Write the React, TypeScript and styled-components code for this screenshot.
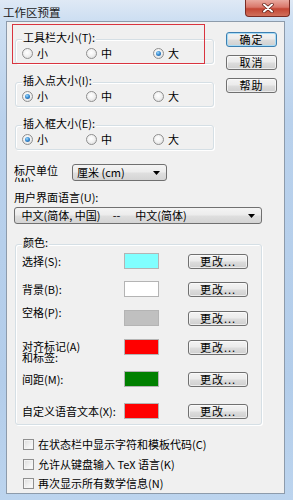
import React, { FC } from "react";
import styled, { createGlobalStyle } from "styled-components";

const GlobalStyle = createGlobalStyle`
  html, body {
    margin: 0;
    padding: 0;
    background: #ffffff;
  }
  body {
    font-family: "Noto Sans CJK SC", "Liberation Sans", sans-serif;
    font-size: 11px;
    color: #000000;
  }
`;

const Window = styled.div`
  width: 293px;
  height: 500px;
  display: flex;
  flex-direction: column;
  background: linear-gradient(to bottom, #dfe9f5 0px, #cddff2 20px, #b9d1ec 120px, #b3cdea 380px, #bcd4ee 100%);
  box-sizing: border-box;
`;

const TitleBar = styled.div`
  height: 21px;
  display: flex;
  justify-content: space-between;
  align-items: flex-start;
  flex-shrink: 0;
`;

const Title = styled.div`
  padding: 5px 0 0 3px;
  font-size: 11.5px;
  line-height: 14px;
  color: #1b1b1b;
`;

const CloseButton = styled.div`
  width: 45px;
  height: 17px;
  margin-right: 3px;
  display: flex;
  align-items: center;
  justify-content: center;
  border: 1px solid #7a2c24;
  border-top: none;
  border-radius: 0 0 4px 4px;
  box-sizing: border-box;
  background: linear-gradient(to bottom, #e9a99f 0%, #d9776a 45%, #c44634 55%, #d0705c 100%);
`;

const Client = styled.div`
  flex: 1;
  margin: 0 8px 6px 6px;
  position: relative;
  background: #f0f0f0;
  border: 1px solid #8d9bab;
  padding: 0 0 0 7px;
  display: flex;
  flex-direction: column;
  align-items: flex-start;
  overflow: hidden;
`;

const Highlight = styled.div`
  position: absolute;
  left: 5px;
  top: 2px;
  width: 193px;
  height: 40px;
  border: 1px solid #d9343f;
  box-sizing: border-box;
  pointer-events: none;
`;

const TopSection = styled.div`
  display: flex;
  align-items: flex-start;
  gap: 12px;
  margin-left: 1px;
`;

const GroupColumn = styled.div`
  width: 199px;
  padding-top: 17px;
  display: flex;
  flex-direction: column;
  gap: 18px;
`;

const ButtonColumn = styled.div`
  padding-top: 10px;
  display: flex;
  flex-direction: column;
  gap: 8px;
`;

const Group = styled.div<{ $width?: number }>`
  width: ${(p) => (p.$width ? `${p.$width}px` : "auto")};
  border: 1px solid #d5dfe5;
  border-radius: 3px;
  box-shadow: inset 1px 1px 0 #ffffff, 1px 1px 0 #ffffff;
  padding: 0 6px 3px 6px;
  box-sizing: border-box;
`;

const Legend = styled.div`
  margin-top: -9px;
  width: fit-content;
  padding: 0 1px;
  background: #f0f0f0;
  line-height: 13px;
  height: 13px;
`;

const RadioRow = styled.div`
  margin-top: 3px;
  display: grid;
  grid-template-columns: 64px 67px auto;
  height: 13px;
  align-items: center;
`;

const Choice = styled.label`
  display: flex;
  align-items: center;
  gap: 4px;
  height: 13px;
  line-height: 13px;
  white-space: pre;
`;

const RadioCircle = styled.span<{ $checked?: boolean }>`
  width: 11px;
  height: 11px;
  border-radius: 50%;
  border: 1px solid #8f8f8f;
  box-sizing: border-box;
  background: radial-gradient(circle at 45% 40%, #ffffff 0%, #f2f2f2 45%, #d5d5d5 100%);
  display: flex;
  align-items: center;
  justify-content: center;

  &::after {
    content: "";
    display: ${(p) => (p.$checked ? "block" : "none")};
    width: 5px;
    height: 5px;
    border-radius: 50%;
    background: radial-gradient(circle at 40% 35%, #a6dcfb 0%, #3a8ed4 45%, #174f8e 100%);
  }
`;

const Button = styled.div<{ $width?: number; $default?: boolean }>`
  width: ${(p) => p.$width ?? 51}px;
  height: 15px;
  box-sizing: border-box;
  border: 1px solid ${(p) => (p.$default ? "#3c7fb1" : "#707070")};
  border-radius: 3px;
  background: linear-gradient(to bottom, #f3f3f3 0%, #ebebeb 48%, #dddddd 52%, #cfcfcf 100%);
  box-shadow: inset 0 0 0 1px ${(p) => (p.$default ? "#a9dcf6" : "rgba(255,255,255,0.6)")};
  display: flex;
  align-items: center;
  justify-content: center;
  line-height: 13px;
  letter-spacing: 1px;
  flex-shrink: 0;
`;

const RulerRow = styled.div`
  margin-top: 14px;
  height: 17px;
  display: flex;
  align-items: flex-start;
`;

const RulerLabel = styled.div`
  width: 50px;
  height: 17px;
  margin-top: 1px;
  margin-right: 8px;
  line-height: 11px;
  overflow: hidden;
`;

const Combo = styled.div<{ $width: number; $top?: number }>`
  width: ${(p) => p.$width}px;
  height: 17px;
  margin-top: ${(p) => p.$top ?? 0}px;
  box-sizing: border-box;
  border: 1px solid #707070;
  border-radius: 3px;
  background: linear-gradient(to bottom, #f4f4f4 0%, #ececec 48%, #dfdfdf 52%, #d4d4d4 100%);
  display: flex;
  align-items: center;
  justify-content: space-between;
  padding: 0 6px 0 4px;
  white-space: pre;
  line-height: 13px;
`;

const PlainLabel = styled.div<{ $gap: number }>`
  margin-top: ${(p) => p.$gap}px;
  line-height: 13px;
`;

const ColorGroup = styled(Group)`
  margin-top: 20px;
  margin-left: 1px;
  padding-bottom: 5px;
`;

const ColorRow = styled.div<{ $gap: number }>`
  margin-top: ${(p) => p.$gap}px;
  height: 16px;
  display: flex;
  align-items: center;
`;

const ColorLabel = styled.div<{ $top?: number; $lh?: number }>`
  width: 102px;
  line-height: ${(p) => p.$lh ?? 13}px;
  white-space: pre;
  align-self: ${(p) => (p.$top !== undefined ? "flex-start" : "center")};
  margin-top: ${(p) => p.$top ?? 0}px;
`;

const Swatch = styled.div<{ $color: string }>`
  width: 35px;
  height: 16px;
  box-sizing: border-box;
  background: ${(p) => p.$color};
  border: 1px solid #b4b4b4;
  margin-right: 29px;
`;

const CheckList = styled.div`
  margin-top: 13px;
  padding-left: 9px;
  display: flex;
  flex-direction: column;
  gap: 6.5px;
`;

const CheckBox = styled.span`
  width: 11px;
  height: 11px;
  box-sizing: border-box;
  border: 1px solid #8f8f8f;
  background: linear-gradient(135deg, #dcdcdc 0%, #f2f2f2 60%, #ffffff 100%);
  box-shadow: inset 0 0 0 1px #f4f4f4;
  flex-shrink: 0;
`;

const Arrow: FC = () => (
  <svg width="7" height="4" viewBox="0 0 7 4">
    <path d="M0 0 L7 0 L3.5 4 Z" fill="#000" />
  </svg>
);

const CloseGlyph: FC = () => (
  <svg width="12" height="10" viewBox="0 0 12 10">
    <path d="M2 1.5 L10 8.5 M10 1.5 L2 8.5" stroke="#5a1a12" strokeWidth="3.4" strokeLinecap="round" />
    <path d="M2 1.5 L10 8.5 M10 1.5 L2 8.5" stroke="#ffffff" strokeWidth="2" strokeLinecap="round" />
  </svg>
);

interface RadioGroupProps {
  title: string;
  selected: number;
}

const SizeGroup: FC<RadioGroupProps> = ({ title, selected }) => (
  <Group>
    <Legend>{title}</Legend>
    <RadioRow>
      {["小", "中", "大"].map((label, i) => (
        <Choice key={label}>
          <RadioCircle $checked={i === selected} />
          {label}
        </Choice>
      ))}
    </RadioRow>
  </Group>
);

const colorRows = [
  { label: "选择(S):", color: "#80ffff", gap: 4 },
  { label: "背景(B):", color: "#ffffff", gap: 12 },
  { label: "空格(P):", color: "#c0c0c0", gap: 13, top: -4 },
  { label: "对齐标记(A)\n和标签:", color: "#ff0000", gap: 13, top: 2, lh: 10.5 },
  { label: "间距(M):", color: "#008000", gap: 16 },
  { label: "自定义语音文本(X):", color: "#ff0000", gap: 16 },
];

const checks = [
  "在状态栏中显示字符和模板代码(C)",
  "允许从键盘输入 TeX 语言(K)",
  "再次显示所有数学信息(N)",
];

const App: FC = () => (
  <>
    <GlobalStyle />
    <Window>
      <TitleBar>
        <Title>工作区预置</Title>
        <CloseButton>
          <CloseGlyph />
        </CloseButton>
      </TitleBar>

      <Client>
        <TopSection>
          <GroupColumn>
            <SizeGroup title="工具栏大小(T):" selected={2} />
            <SizeGroup title="插入点大小(I):" selected={0} />
            <SizeGroup title="插入框大小(E):" selected={0} />
          </GroupColumn>
          <ButtonColumn>
            <Button $default>确定</Button>
            <Button>取消</Button>
            <Button>帮助</Button>
          </ButtonColumn>
        </TopSection>

        <RulerRow>
          <RulerLabel>标尺单位(W):</RulerLabel>
          <Combo $width={95}>
            <span>厘米 (cm)</span>
            <Arrow />
          </Combo>
        </RulerRow>

        <PlainLabel $gap={10}>用户界面语言(U):</PlainLabel>
        <Combo $width={248} $top={3}>
          <span> 中文(简体, 中国)     --      中文(简体)</span>
          <Arrow />
        </Combo>

        <ColorGroup $width={247}>
          <Legend>颜色:</Legend>
          {colorRows.map((row) => (
            <ColorRow key={row.label} $gap={row.gap}>
              <ColorLabel $top={row.top} $lh={row.lh}>
                {row.label}
              </ColorLabel>
              <Swatch $color={row.color} />
              <Button $width={60}>更改...</Button>
            </ColorRow>
          ))}
        </ColorGroup>

        <CheckList>
          {checks.map((text) => (
            <Choice key={text}>
              <CheckBox />
              {text}
            </Choice>
          ))}
        </CheckList>

        <Highlight />
      </Client>
    </Window>
  </>
);

export default App;
